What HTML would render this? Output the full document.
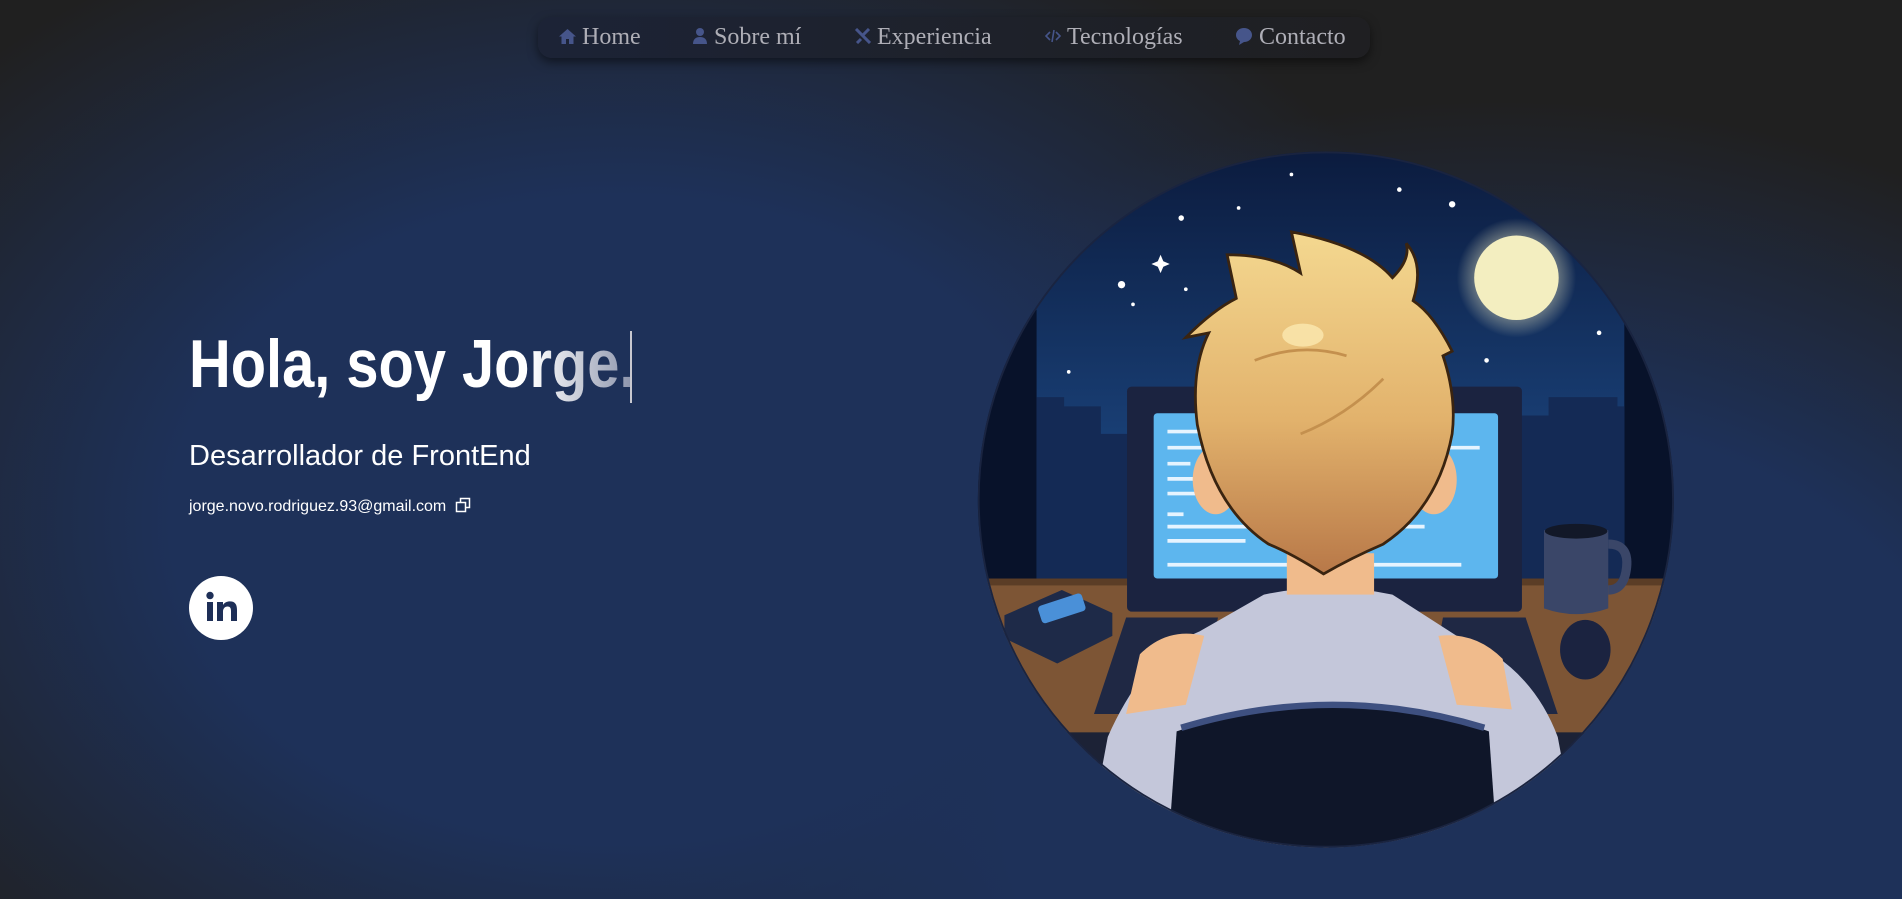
<!DOCTYPE html>
<html><head><meta charset="utf-8"><style>
html,body{margin:0;padding:0}
body{width:1902px;height:899px;overflow:hidden;position:relative;font-family:"Liberation Sans",sans-serif;
background:
radial-gradient(ellipse 900px 700px at 1500px 800px,#1e3159 55%,rgba(30,49,89,0) 100%),
radial-gradient(ellipse 900px 650px at 620px 520px,#1e3159 50%,rgba(30,49,89,0) 100%),
#202020;}
.nav{position:absolute;left:538px;top:17px;width:832px;height:41px;border-radius:14px;
background:linear-gradient(90deg,#1c2336,#1e2129 60%,#1f1f22);box-shadow:0 4px 10px rgba(0,0,0,.5);}
.nav span{position:absolute;top:7px;font-family:"Liberation Serif",serif;font-size:24px;color:#aeaeb6;white-space:nowrap}
.nav svg{position:absolute;top:13px}
h1{position:absolute;left:189px;top:324px;margin:0;font-size:68px;font-weight:bold;color:#fff;white-space:nowrap;transform:scaleX(.85);transform-origin:left top;line-height:80px}
h1 .g{background:linear-gradient(90deg,#fff,#8a92aa);-webkit-background-clip:text;background-clip:text;color:transparent}
.cur{position:absolute;left:630px;top:331px;width:2px;height:72px;background:#c8c8d0}
.sub{position:absolute;left:189px;top:440px;font-size:29px;color:#fff;white-space:nowrap}
.mail{position:absolute;left:189px;top:497px;font-size:16px;color:#fff;white-space:nowrap}
.li{position:absolute;left:189px;top:576px;width:64px;height:64px;border-radius:50%;background:#fff}
</style></head><body>
<div class="nav">
<svg style="left:21px;top:12px" width="17" height="15" viewBox="0 0 17 15"><path d="M8.5 0L0 7.5h2.5V15h4.5v-5h3v5h4.5V7.5H17z" fill="#46558a"/></svg>
<span style="left:44px">Home</span>
<svg style="left:155px;top:11px" width="14" height="16" viewBox="0 0 14 16"><circle cx="7" cy="4" r="4" fill="#46558a"/><path d="M0 16c0-5 3-7 7-7s7 2 7 7z" fill="#46558a"/></svg>
<span style="left:176px">Sobre mí</span>
<svg style="left:316px;top:11px" width="17" height="16" viewBox="0 0 17 16"><path d="M2 1l14 14M15 1L8 8M3 15l4-4" stroke="#46558a" stroke-width="3"/></svg>
<span style="left:339px">Experiencia</span>
<svg style="left:507px;top:12px" width="16" height="14" viewBox="0 0 16 14"><path d="M5 3L1 7l4 4M11 3l4 4-4 4M9 1L7 13" stroke="#46558a" stroke-width="1.6" fill="none"/></svg>
<span style="left:529px">Tecnologías</span>
<svg style="left:698px;top:11px" width="16" height="17" viewBox="0 0 16 17"><path d="M8 0C3.5 0 0 3 0 7c0 3 2 5 4 6l-1 4 5-3c4.5 0 8-3 8-7S12.5 0 8 0z" fill="#46558a"/></svg>
<span style="left:721px">Contacto</span>
</div>

<h1>Hola, soy Jo<span class="g">rge.</span></h1>
<div class="cur"></div>
<div class="sub">Desarrollador de FrontEnd</div>
<div class="mail">jorge.novo.rodriguez.93@gmail.com <svg style="vertical-align:-2px;margin-left:4px" width="16" height="16" viewBox="0 0 16 16"><rect x="1.5" y="5.5" width="9" height="9" fill="none" stroke="#fff" stroke-width="1.5"/><path d="M5.5 5.5V1.5h9v9h-4" fill="none" stroke="#fff" stroke-width="1.5"/></svg></div>
<div class="li"><svg width="64" height="64" viewBox="0 0 64 64"><rect x="18" y="26" width="6" height="19" fill="#1e2f57"/><circle cx="21" cy="19.5" r="3.7" fill="#1e2f57"/><path d="M28 26h6v3c1.5-2.5 4-3.6 7-3.6 5 0 7 3 7 8.6V45h-6V35c0-3-1-4.5-3.5-4.5S34 32.5 34 35.5V45h-6z" fill="#1e2f57"/></svg></div>

<svg style="position:absolute;left:970px;top:140px" width="720" height="720" viewBox="0 0 1568 1568">
<defs>
<clipPath id="c"><circle cx="775" cy="783" r="758"/></clipPath>
<linearGradient id="sky" x1="0" y1="0" x2="0" y2="1"><stop offset="0" stop-color="#0b1a3c"/><stop offset=".6" stop-color="#1f4f8e"/><stop offset="1" stop-color="#1f4f8e"/></linearGradient>
<linearGradient id="hair" x1="0" y1="0" x2="0" y2="1"><stop offset="0" stop-color="#f4d890"/><stop offset=".55" stop-color="#e2b26c"/><stop offset="1" stop-color="#b87848"/></linearGradient>
<radialGradient id="moon"><stop offset=".7" stop-color="#f6f1c6"/><stop offset="1" stop-color="#f6f1c6" stop-opacity="0"/></radialGradient>
</defs>
<g clip-path="url(#c)">
<rect width="1568" height="1568" fill="url(#sky)"/>
<rect x="0" y="370" width="145" height="600" fill="#08122a"/>
<rect x="1425" y="370" width="145" height="600" fill="#08122a"/>
<path d="M145 560h60v20h80v60h70v320H145zM1200 600h60v-40h150v20h15v380h-225z" fill="#142a55"/>
<circle cx="1190" cy="300" r="130" fill="url(#moon)" opacity=".35"/>
<circle cx="1190" cy="300" r="92" fill="#f3eec0"/>
<g fill="#fff"><circle cx="460" cy="170" r="6"/><circle cx="330" cy="315" r="8"/><circle cx="585" cy="148" r="4"/><circle cx="1050" cy="140" r="7"/><circle cx="935" cy="108" r="5"/><circle cx="700" cy="75" r="4"/><circle cx="355" cy="358" r="4"/><circle cx="470" cy="325" r="4"/><circle cx="1370" cy="420" r="5"/><circle cx="1125" cy="480" r="5"/><circle cx="215" cy="505" r="4"/><path d="M415 250l6 14 14 6-14 6-6 14-6-14-14-6 14-6z"/></g>
<rect x="0" y="960" width="1568" height="608" fill="#7d5535"/>
<rect x="0" y="1290" width="1568" height="278" fill="#1c2236"/>
<rect x="0" y="955" width="1568" height="15" fill="#5b3d26"/>
<rect x="342" y="537" width="860" height="490" rx="10" fill="#1b2340"/>
<rect x="400" y="595" width="750" height="360" rx="8" fill="#5db6ee"/>
<g stroke="#e6f4ff" stroke-width="8"><path d="M430 635h80M430 670h90M430 705h50M430 738h70M430 770h60M430 815h35M430 842h240M430 873h170M430 925h640M880 842h110M1040 670h70"/></g>
<path d="M75 1035l125-55 110 50v50l-120 60-115-55z" fill="#1e2a48"/><rect x="150" y="1000" width="100" height="40" rx="8" fill="#4a90d8" transform="rotate(-18 200 1020)"/>
<path d="M1250 850h140v170q-70 25-140 0z" fill="#3a4668"/><path d="M1390 880q45 0 40 50t-40 50" stroke="#3a4668" stroke-width="20" fill="none"/><ellipse cx="1320" cy="852" rx="68" ry="16" fill="#121828"/>
<ellipse cx="1340" cy="1110" rx="55" ry="65" fill="#1b2340"/>
<path d="M340 1040h200l-40 210H270zM1030 1040h180l70 210h-290z" fill="#1f2844"/>
<path d="M250 1568L300 1300Q380 1120 500 1070L640 990Q780 960 920 990L1060 1080Q1220 1140 1280 1300L1330 1568z" fill="#c4c7da"/>
<path d="M370 1120q60-60 140-40l-40 150-130 20zM1160 1130q-60-60-140-50l40 150 120 10z" fill="#f0bb8c"/>
<path d="M430 1568l20-280q340-120 680 0l20 280z" fill="#0f1629"/>
<path d="M460 1280q330-100 660 0" stroke="#3e5080" stroke-width="14" fill="none"/>
<rect x="690" y="900" width="190" height="90" fill="#f0bb8c"/>
<ellipse cx="535" cy="740" rx="50" ry="75" fill="#f0bb8c"/><ellipse cx="1010" cy="740" rx="50" ry="75" fill="#f0bb8c"/>
<path d="M770 945Q700 900 650 880Q530 800 495 620Q480 500 520 420L470 430Q530 370 580 345L560 250Q660 250 720 290L700 200Q860 230 920 300Q960 260 950 225Q990 270 965 350Q1010 380 1050 460L1030 470Q1060 560 1050 640Q1020 800 900 880Q830 910 770 945z" fill="url(#hair)" stroke="#3a2410" stroke-width="6"/>
<path d="M620 480Q720 440 820 470M720 640Q820 600 900 520" stroke="#c4904e" stroke-width="6" fill="none"/>
<ellipse cx="725" cy="425" rx="45" ry="25" fill="#fbe8b0" opacity=".8"/>
</g>
<circle cx="775" cy="783" r="756" fill="none" stroke="#1a2440" stroke-width="4"/>
</svg>
</body></html>
